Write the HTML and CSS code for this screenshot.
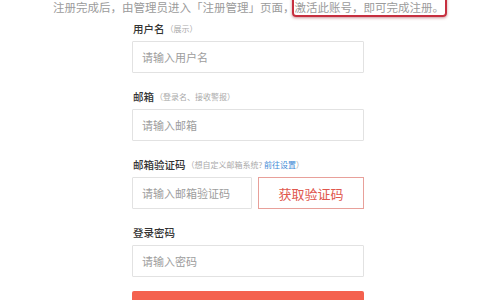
FILE: index.html
```html
<!DOCTYPE html>
<html lang="zh">
<head>
<meta charset="utf-8">
<link rel="stylesheet" href="styles.css">
</head>
<body>
<p class="note">注册完成后，由管理员进入「注册管理」页面，<span class="mark">激活此账号，即可完成注册。</span></p>
<form class="form">
  <div class="field">
    <div class="label">用户名<span class="hint">（展示）</span></div>
    <div class="input">请输入用户名</div>
  </div>
  <div class="field">
    <div class="label">邮箱<span class="hint">（登录名、接收警报）</span></div>
    <div class="input">请输入邮箱</div>
  </div>
  <div class="field">
    <div class="label">邮箱验证码<span class="hint">（想自定义邮箱系统? <a class="link">前往设置</a>）</span></div>
    <div class="row">
      <div class="input code">请输入邮箱验证码</div>
      <div class="getcode">获取验证码</div>
    </div>
  </div>
  <div class="field">
    <div class="label">登录密码</div>
    <div class="input">请输入密码</div>
  </div>
  <div class="submit"></div>
</form>
</body>
</html>
```
FILE: styles.css
```css
html, body {
  margin: 0;
  padding: 0;
  background: #fff;
  overflow: hidden;
}
body {
  font-family: "Noto Sans CJK SC", "Noto Sans", sans-serif;
  color: #333;
  width: 480px;
  height: 300px;
}
.note {
  margin: 0;
  padding-left: 53px;
  font-size: 11.5px;
  line-height: 15px;
  height: 15px;
  color: #9b9b9b;
  white-space: nowrap;
}
.mark {
  border: 2px solid #c62f3f;
  border-radius: 4px;
  padding: 3px 1px 0 1px;
  margin-left: -3px;
  box-shadow: 0 1px 3px rgba(140, 20, 30, 0.45);
}
.form {
  margin: 0 0 0 132px;
  width: 232px;
  display: flex;
  flex-direction: column;
}
.field {
  display: flex;
  flex-direction: column;
  margin-bottom: 10px;
}
.label {
  height: 26px;
  display: flex;
  align-items: center;
  font-size: 10.5px;
  font-weight: 500;
  color: #333;
  padding-left: 1px;
}
.hint {
  font-size: 8px;
  font-weight: 400;
  color: #aaa;
  margin-left: 1px;
}
.link {
  color: #3f8ad6;
}
.input {
  box-sizing: border-box;
  height: 32px;
  border: 1px solid #e2e2e2;
  border-radius: 1px;
  padding-left: 9px;
  display: flex;
  align-items: center;
  font-size: 11px;
  color: #9d9d9d;
}
.row {
  display: flex;
  gap: 6px;
}
.code {
  width: 120px;
}
.getcode {
  box-sizing: border-box;
  flex: 1;
  height: 32px;
  border: 1px solid #e8a09a;
  display: flex;
  align-items: center;
  justify-content: center;
  font-size: 13px;
  color: #e0574d;
}
.submit {
  margin-top: 4px;
  height: 36px;
  background: #f4614e;
  border-radius: 2px;
}
```
